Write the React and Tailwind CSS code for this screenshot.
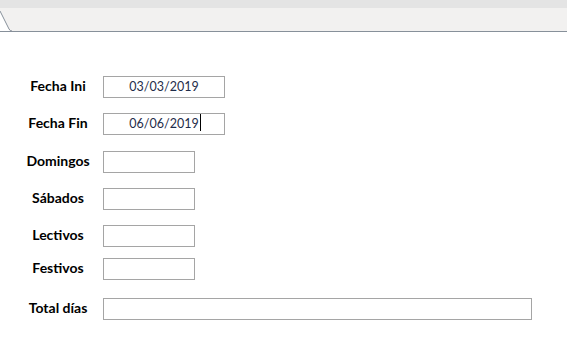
import React from "react";

const rows = [
  { label: "Fecha Ini", value: "03/03/2019", width: "w-[122px]", mt: "mt-[44px]" },
  { label: "Fecha Fin", value: "06/06/2019", width: "w-[122px]", mt: "mt-[15px]", caret: true },
  { label: "Domingos", value: "", width: "w-[92px]", mt: "mt-[16px]" },
  { label: "Sábados", value: "", width: "w-[92px]", mt: "mt-[15px]" },
  { label: "Lectivos", value: "", width: "w-[92px]", mt: "mt-[15px]" },
  { label: "Festivos", value: "", width: "w-[92px]", mt: "mt-[11px]" },
  { label: "Total días", value: "", width: "w-[429px]", mt: "mt-[18px]" },
];

export default function App() {
  return (
    <div className="w-[567px] h-[363px] bg-white overflow-hidden" style={{ fontFamily: "Lato, 'Open Sans', sans-serif" }}>
      <div className="h-[8px] bg-[#e4e4e4]" />
      <div className="relative h-[24px] bg-[#f2f1f0] border-b border-[#87909a]">
        <svg className="absolute left-0 top-0" width="12" height="24" viewBox="0 0 12 24">
          <polygon points="0,3 10,23 0,23" fill="#ffffff" />
          <path d="M0 3 L9 21 Q10 23 12 23" stroke="#87909a" strokeWidth="1" fill="none" />
        </svg>
      </div>
      {rows.map((r) => (
        <div key={r.label} className={`flex items-center ${r.mt}`}>
          <div className="w-[103px] pl-[13px] text-center text-[14px] font-bold text-black leading-none -mt-[3px]">
            {r.label}
          </div>
          <div className={`${r.width} h-[22px] border border-[#a5a5a5] flex items-center justify-center text-[12.5px] text-[#1f2d4a]`}>
            {r.value && (
              <span className="relative">
                {r.value}
                {r.caret && <span className="absolute -right-[2px] top-[-1px] h-[17px] w-px bg-black" />}
              </span>
            )}
          </div>
        </div>
      ))}
    </div>
  );
}
